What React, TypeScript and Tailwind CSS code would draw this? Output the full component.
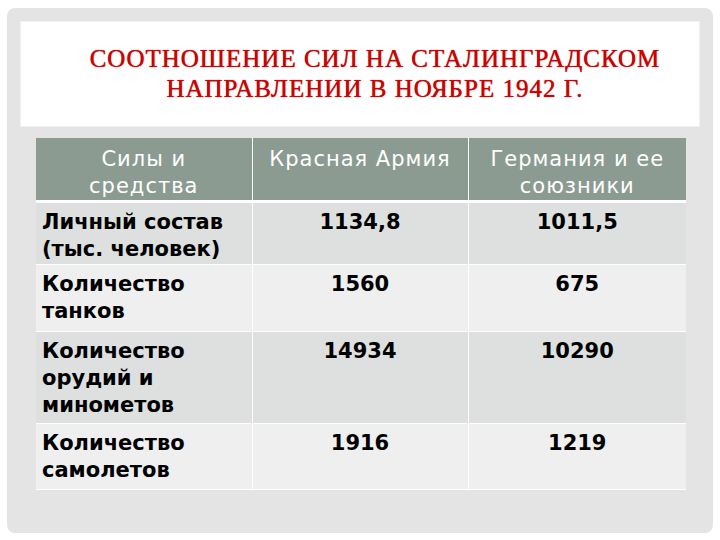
import React from 'react'

const rows = [
  { name: ['Личный состав', '(тыс. человек)'], red: '1134,8', ger: '1011,5', h: 'h-[63px]', bg: 'bg-[#dde0de]' },
  { name: ['Количество', 'танков'], red: '1560', ger: '675', h: 'h-[67px]', bg: 'bg-[#efefef]' },
  { name: ['Количество', 'орудий и', 'минометов'], red: '14934', ger: '10290', h: 'h-[92px]', bg: 'bg-[#dde0de]' },
  { name: ['Количество', 'самолетов'], red: '1916', ger: '1219', h: 'h-[66px]', bg: 'bg-[#efefef]' },
]

export default function App() {
  return (
    <div className="w-[720px] h-[540px] bg-white pt-[8px] pl-[7px]">
      <div className="w-[706px] h-[525px] rounded-lg bg-[#e4e4e4] pt-[13px] pl-[13px]">
        {/* Title */}
        <div className="w-[680px] h-[106px] bg-white border border-[#f0f0f0] flex flex-col items-center pt-[22px] pl-[30px]">
          <h1
            className="text-[25px] leading-[30px] tracking-[1px] text-[#d40000] text-center uppercase [text-shadow:0_0_1px_#800000]"
            style={{ fontFamily: '"Liberation Serif", "Times New Roman", serif' }}
          >
            Соотношение сил на Сталинградском
            <br />
            направлении в ноябре 1942 г.
          </h1>
        </div>

        {/* Table */}
        <table
          className="mt-[11px] ml-[16px] w-[650px] border-collapse text-[21px] leading-[27px]"
          style={{ fontFamily: '"DejaVu Sans", "Noto Sans", sans-serif' }}
        >
          <colgroup>
            <col className="w-[216px]" />
            <col className="w-[216px]" />
            <col className="w-[218px]" />
          </colgroup>
          <thead>
            <tr className="h-[62px] bg-[#8c9b92] text-white border-b-[3px] border-white">
              <th className="font-normal align-top pt-[8px] border-r border-white tracking-[1px]">
                Силы и<br />средства
              </th>
              <th className="font-normal align-top pt-[8px] border-r border-white tracking-[1px]">
                Красная Армия
              </th>
              <th className="font-normal align-top pt-[8px] tracking-[1px]">
                Германия и ее<br />союзники
              </th>
            </tr>
          </thead>
          <tbody>
            {rows.map((r, i) => (
              <tr key={i} className={`${r.h} ${r.bg} border-b border-white text-black font-bold`}>
                <td className="align-top pl-[6px] pt-[6px] border-r border-white">
                  {r.name.map((l, j) => (
                    <div key={j}>{l}</div>
                  ))}
                </td>
                <td className="align-top text-center pt-[6px] border-r border-white">{r.red}</td>
                <td className="align-top text-center pt-[6px]">{r.ger}</td>
              </tr>
            ))}
          </tbody>
        </table>
      </div>
    </div>
  )
}
